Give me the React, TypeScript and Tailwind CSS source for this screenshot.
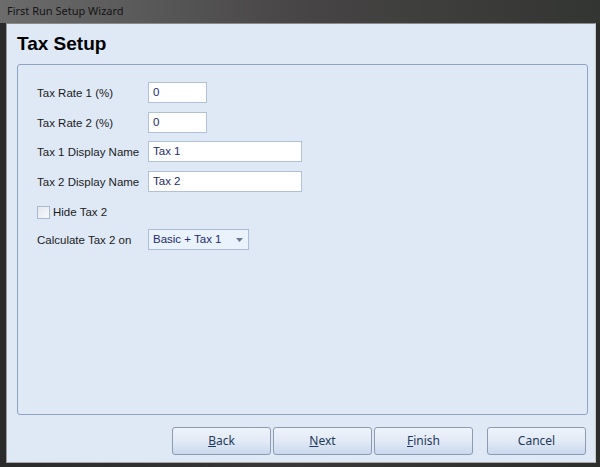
import React from "react";

const lab = { fontFamily: '"Liberation Sans", Arial, sans-serif' };
const labelCls = "w-[111px] shrink-0 pt-[2px] text-[11.5px] text-[#1b1b1b]";
const inputCls =
  "h-[21px] border border-[#b1c1d8] bg-white pl-[4px] flex items-center text-[11.5px] text-[#1e2c6c]";

function Row({ label, value, width }: { label: string; value: string; width: string }) {
  return (
    <div className="flex h-[21px] items-center">
      <div className={labelCls} style={lab}>{label}</div>
      <div className={`${inputCls} ${width}`} style={lab}>{value}</div>
    </div>
  );
}

function Btn({ label, u }: { label: string; u?: boolean }) {
  return (
    <div
      className="flex h-[28px] w-[99px] items-center justify-center rounded-[3px] border border-[#8d9bb0] bg-gradient-to-b from-[#eef3fa] via-[#e2eaf6] to-[#c9d8ee] text-[12px] text-[#1e395b]"
      style={{ fontFamily: '"Noto Sans", sans-serif' }}
    >
      {u ? (
        <span>
          <span className="underline">{label[0]}</span>
          {label.slice(1)}
        </span>
      ) : (
        label
      )}
    </div>
  );
}

export default function App() {
  return (
    <div
      className="flex h-[467px] w-[600px] flex-col overflow-hidden bg-gradient-to-r from-[#2a2a2a] via-[#3a3838] to-[#2c2e2c]"
      style={{ fontFamily: '"Liberation Sans", Arial, sans-serif' }}
    >
      <div className="flex h-[23px] shrink-0 items-center bg-gradient-to-r from-[#6c6c6c] via-[#474545] to-[#333533] pl-[7px]">
        <span
          className="text-[11px] text-[#141414]"
          style={{ fontFamily: '"Noto Sans", sans-serif' }}
        >
          First Run Setup Wizard
        </span>
      </div>
      <div className="ml-[6px] h-[440px] w-[590px] border border-l-[#9a9a9a] border-t-[#8a8a8a] border-r-[#c9c9c9] border-b-[#a8a8a8] bg-[#dfe9f6]">
        <div className="flex h-[40px] items-center pl-[10px] pt-[1px]">
          <span className="text-[19px] font-bold text-black">Tax Setup</span>
        </div>
        <div className="ml-[10px] flex h-[351px] w-[571px] flex-col rounded-[3px] border border-[#8ea2c2] pl-[19px] pt-[17px]">
          <Row label="Tax Rate 1 (%)" value="0" width="w-[59px]" />
          <div className="mt-[9px]">
            <Row label="Tax Rate 2 (%)" value="0" width="w-[59px]" />
          </div>
          <div className="mt-[8px]">
            <Row label="Tax 1 Display Name" value="Tax 1" width="w-[154px]" />
          </div>
          <div className="mt-[9px]">
            <Row label="Tax 2 Display Name" value="Tax 2" width="w-[154px]" />
          </div>
          <div className="mt-[14px] flex h-[13px] items-center">
            <div className="h-[13px] w-[13px] border border-[#a9b9cf] bg-gradient-to-br from-[#e4e8ee] to-[#f6f8fb]" />
            <span className="ml-[3px] text-[11.5px] text-[#1b1b1b]" style={lab}>Hide Tax 2</span>
          </div>
          <div className="mt-[10px] flex h-[21px] items-center">
            <div className={labelCls} style={lab}>Calculate Tax 2 on</div>
            <div
              className="flex h-[21px] w-[101px] items-center justify-between border border-[#abbdd7] bg-[#eaf2fc] pl-[4px] pr-[5px] text-[11.5px] text-[#1e2c6c]"
              style={lab}
            >
              <span>Basic + Tax 1</span>
              <svg width="7" height="4" viewBox="0 0 7 4">
                <path d="M0 0 L7 0 L3.5 4 Z" fill="#6a7890" />
              </svg>
            </div>
          </div>
        </div>
        <div className="mt-[12px] flex pl-[165px]">
          <Btn label="Back" u />
          <div className="ml-[2px]">
            <Btn label="Next" u />
          </div>
          <div className="ml-[2px]">
            <Btn label="Finish" u />
          </div>
          <div className="ml-[14px]">
            <Btn label="Cancel" />
          </div>
        </div>
      </div>
    </div>
  );
}
